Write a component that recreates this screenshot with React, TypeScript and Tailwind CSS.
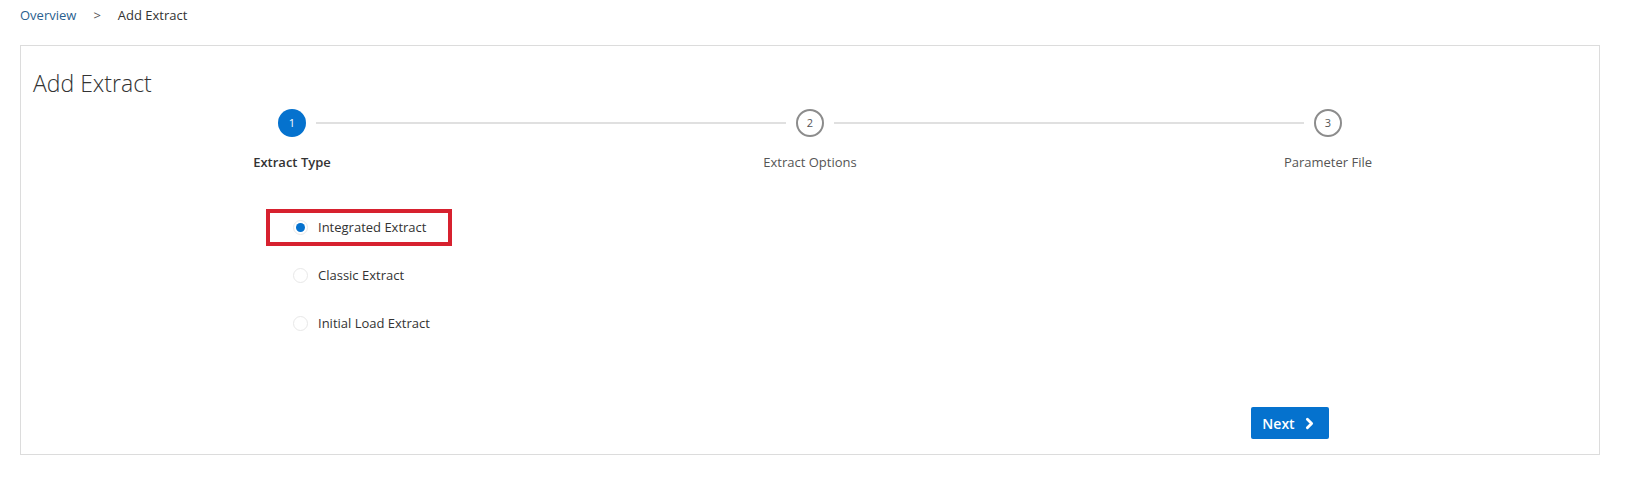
import { ChevronRight } from 'lucide-react'

const steps = ['Extract Type', 'Extract Options', 'Parameter File']
const options = ['Integrated Extract', 'Classic Extract', 'Initial Load Extract']

export default function App() {
  return (
    <div className="min-h-[487px] bg-white pl-[20px] pr-[27px] pt-[6px] font-['Open_Sans','Noto_Sans',sans-serif] text-[#333]">
      {/* breadcrumb */}
      <div className="flex h-[20px] items-center text-[13px]">
        <span className="text-[#2a5f8f]">Overview</span>
        <span className="mx-[17px] text-[#555]">&gt;</span>
        <span className="text-[#333]">Add Extract</span>
      </div>

      <div className="mt-[19px] flex h-[410px] flex-col border border-[#dcdcdc] px-[12px] pt-[22px]">
        <h1 className="h-[30px] text-[23px] leading-[30px] font-light text-[#333]">Add Extract</h1>

        {/* train */}
        <div className="mt-[11px] grid grid-cols-3">
          {steps.map((s, i) => (
            <div key={s} className="flex flex-col items-center">
              <div className="flex w-full items-center">
                <div className={`h-[2px] flex-1 ${i === 0 ? 'bg-transparent' : 'bg-[#e0e0e0]'}`} />
                <div className="mx-[10px]">
                  {i === 0 ? (
                    <div className="flex h-[28px] w-[28px] items-center justify-center rounded-full bg-[#0572ce] text-[11px] text-white">1</div>
                  ) : (
                    <div className="flex h-[28px] w-[28px] items-center justify-center rounded-full border-2 border-[#8c8c8c] bg-white text-[11px] text-[#555]">{i + 1}</div>
                  )}
                </div>
                <div className={`h-[2px] flex-1 ${i === 2 ? 'bg-transparent' : 'bg-[#e0e0e0]'}`} />
              </div>
              <div className={`mt-[16px] h-[18px] text-[13px] leading-[18px] ${i === 0 ? 'font-semibold text-[#333]' : 'text-[#555]'}`}>{s}</div>
            </div>
          ))}
        </div>

        {/* radio group */}
        <div className="mt-[38px] ml-[233px] flex flex-col items-start gap-[11px]">
          {options.map((o, i) => (
            <div key={o} className={`flex h-[37px] items-center border-4 pl-[23px] pr-[22px] ${i === 0 ? 'border-[#d7212f]' : 'border-transparent'}`}>
              <div className="flex h-[15px] w-[15px] items-center justify-center rounded-full border border-[#e8e8e8] bg-white">
                {i === 0 && <div className="h-[9px] w-[9px] rounded-full bg-[#0572ce]" />}
              </div>
              <span className="ml-[10px] text-[13px] text-[#333]">{o}</span>
            </div>
          ))}
        </div>

        <div className="mt-auto mb-[15px] flex justify-end pr-[258px]">
          <button className="flex h-[32px] w-[78px] items-center justify-center gap-[6px] rounded-[2px] bg-[#0572ce] text-[14px] font-semibold text-white">
            Next
            <ChevronRight size={17} strokeWidth={4} />
          </button>
        </div>
      </div>
    </div>
  )
}
